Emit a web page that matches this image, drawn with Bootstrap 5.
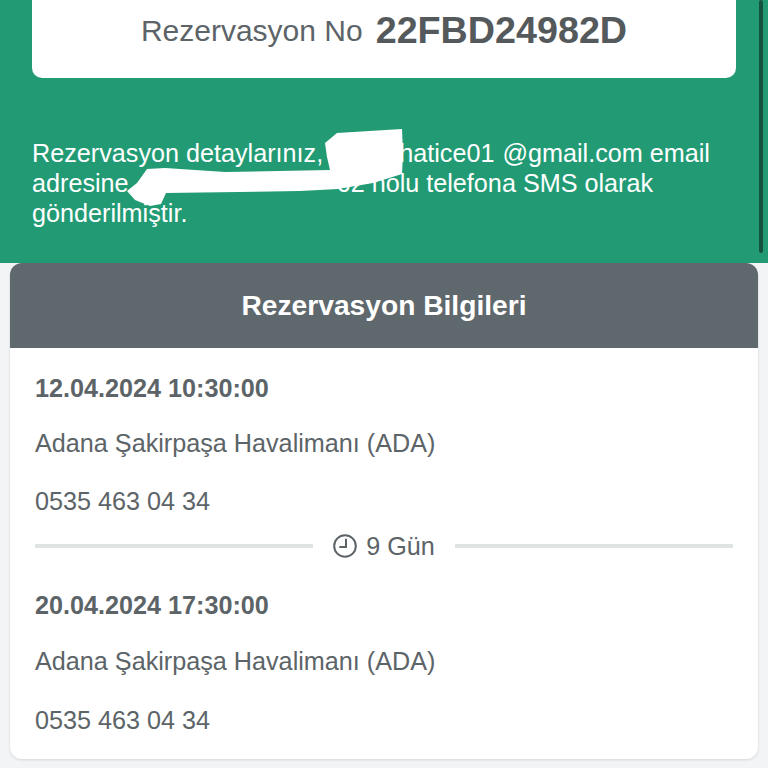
<!DOCTYPE html>
<html lang="tr">
<head>
  <meta charset="UTF-8">
  <title>Rezervasyon</title>
  <link href="https://cdn.jsdelivr.net/npm/bootstrap@5.3.0/dist/css/bootstrap.min.css" rel="stylesheet">
  <style>
    html, body { height: 768px; overflow: hidden; }
    body { background: #f3f4f5; font-family: "Liberation Sans", Arial, sans-serif; color: #5c6468; }
    .green-top { background: #229b75; height: 263px; padding: 0 32px; position: relative; }
    .no-box { height: 78px; border-radius: 0 0 10px 10px; font-size: 30px; padding-bottom: 17px; }
    .no-box b { font-size: 37.7px; color: #54595c; margin-left: 13px; }
    .mail-text { margin: 60px 0 0; font-size: 25.2px; line-height: 30px; color: #fff; white-space: nowrap; }
    .hid { display: inline-block; }
    .hid-a { width: 69px; }
    .hid-b { width: 194px; }
    .at-gap { margin-left: 8px; }
    .fake-scroll { position: absolute; right: 5px; top: 0; width: 4px; height: 253px; background: #14523f; border-radius: 2px; }
    .scribble { position: absolute; left: 0; top: 0; }
    .res-card { margin: 0 10px; height: 496px; border: 0; border-radius: 12px; box-shadow: 0 1px 3px rgba(0,0,0,.12); overflow: hidden; }
    .res-head { background: #5f686c; color: #fff; height: 85px; font-size: 28.2px; font-weight: 700; }
    .res-body { padding: 25px 25px 0; font-size: 25.2px; line-height: 30px; }
    .res-body p { margin: 0; }
    .when { font-weight: 700; }
    .where { margin-top: 25px !important; }
    .phone { margin-top: 28px !important; }
    .where-low { margin-top: 26px !important; }
    .phone-low { margin-top: 29px !important; }
    .gap-line { margin: 15px 0 29px; }
    .gap-line hr { flex: 1 1 0; margin: 0; border: 0; height: 4px; background: #dfe3e4; opacity: 1; }
    .gap-line span { padding: 0 20px; display: flex; align-items: center; gap: 9px; }
  </style>
</head>
<body>
  <div class="green-top">
    <div class="no-box bg-white d-flex align-items-center justify-content-center">
      <span>Rezervasyon No</span><b>22FBD24982D</b>
    </div>
    <div class="mail-text">
      <div>Rezervasyon detaylarınız, <span class="hid hid-a"></span>hatice01<span class="at-gap">@gmail.com email</span></div>
      <div>adresine <span class="hid hid-b"></span> 62 nolu telefona SMS olarak</div>
      <div>gönderilmiştir.</div>
    </div>
    <div class="fake-scroll"></div>
    <svg class="scribble" width="768" height="263" viewBox="0 0 768 263">
      <path fill="#fff" d="M337 133 L402 129 L403 153 L402 174 L373 183 L338 189 L300 191 L166 193 L161 204 L150 206 L135 200 L127 191 L137 183 L147 169 L165 168 L225 172 L330 170 L327 157 L325 143 Z"/>
    </svg>
  </div>
  <div class="card res-card bg-white">
    <div class="res-head d-flex align-items-center justify-content-center">Rezervasyon Bilgileri</div>
    <div class="res-body">
      <p class="when">12.04.2024 10:30:00</p>
      <p class="where">Adana Şakirpaşa Havalimanı (ADA)</p>
      <p class="phone">0535 463 04 34</p>
      <div class="gap-line d-flex align-items-center">
        <hr>
        <span>
          <svg width="24" height="24" viewBox="0 0 24 24" fill="none" stroke="#5c6468" stroke-width="2"><circle cx="12" cy="12" r="10.8"/><path d="M13 5.5V13H7" stroke-linecap="round"/></svg>
          9 Gün
        </span>
        <hr>
      </div>
      <p class="when">20.04.2024 17:30:00</p>
      <p class="where where-low">Adana Şakirpaşa Havalimanı (ADA)</p>
      <p class="phone phone-low">0535 463 04 34</p>
    </div>
  </div>
  <script src="https://cdn.jsdelivr.net/npm/bootstrap@5.3.0/dist/js/bootstrap.bundle.min.js"></script>
</body>
</html>
